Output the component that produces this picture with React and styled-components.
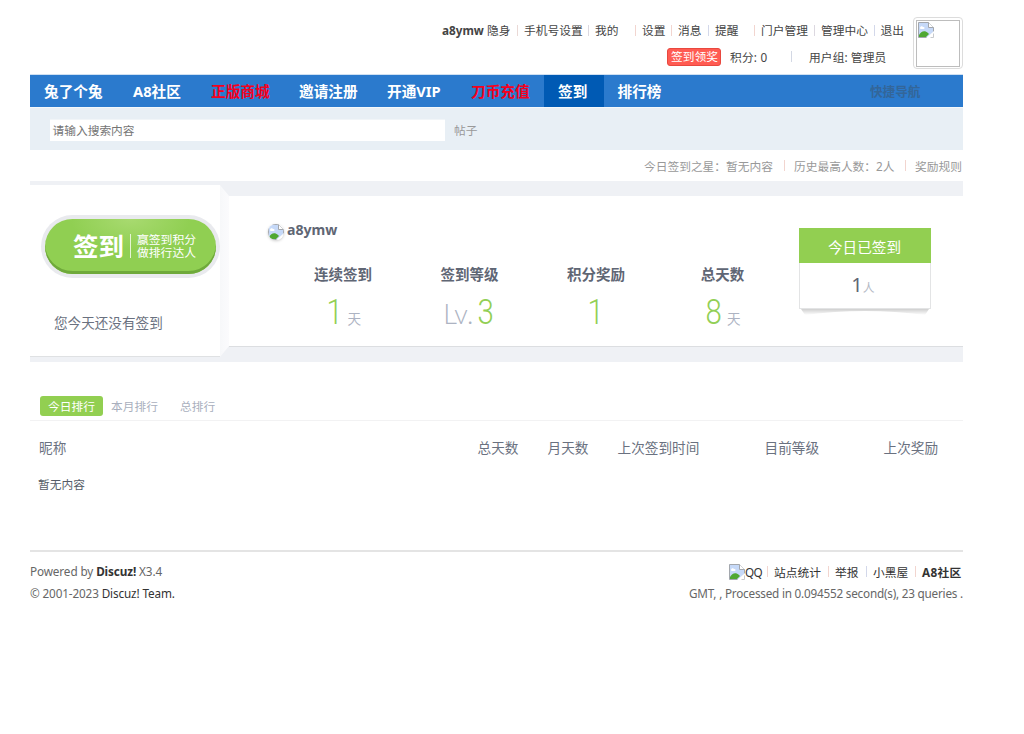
import React from 'react';
import styled, { createGlobalStyle } from 'styled-components';

const Global = createGlobalStyle`
  * { box-sizing: border-box; }
  body {
    margin: 0;
    background: #fff;
    color: #444;
    font: 11.72px/20px "Noto Sans", "Noto Sans CJK SC", sans-serif;
  }
`;

const Page = styled.div`
  width: 933px;
  margin-left: 30px;
  display: flex;
  flex-direction: column;
`;

/* One run of text; $w is the distance to the start of the next run. */
const Run = styled.span`
  display: block;
  flex: none;
  width: ${p => p.$w}px;
  white-space: nowrap;
  color: ${p => p.$color || 'inherit'};
  font-weight: ${p => (p.$bold ? 700 : 400)};
  letter-spacing: ${p => p.$ls || 0}px;
`;

const Bar = styled.i`
  flex: none;
  width: 1px;
  height: 11px;
  margin-right: ${p => p.$after ?? 6}px;
  background: ${p => p.$color || '#d3d8e4'};
`;

const Line = styled.div`
  display: flex;
  align-items: center;
  justify-content: ${p => (p.$end ? 'flex-end' : 'flex-start')};
  height: ${p => p.$h || 20}px;
  padding-left: ${p => p.$left || 0}px;
`;

const Header = styled.header`
  display: flex;
  height: 74px;
  padding-top: 17px;
`;

const UserLinks = styled.div`
  width: 882.5px;
  display: flex;
  flex-direction: column;
  gap: 1px;
`;

const SignTag = styled.span`
  width: 54px;
  height: 18px;
  margin-right: 9px;
  border: 1px solid #e8483f;
  border-radius: 3px;
  background: #ff5b52;
  color: #fff;
  line-height: 15px;
  padding-left: 3px;
  white-space: nowrap;
`;

const Avatar = styled.div`
  width: 50.5px;
  height: 52px;
  padding: 2px;
  border: 1px solid #dcdcdc;
  border-radius: 4px;
  background: #fff;
`;

const AvatarInner = styled.div`
  height: 47px;
  border: 1px solid #bdbdbd;
  padding: 1px;
  line-height: 0;
`;

const Nav = styled.nav`
  display: flex;
  height: 33px;
  background: #2b7acd;
  border-top: 1px solid #cfe0f2;
  font-size: 14.65px;
  line-height: 32px;
`;

const NavItem = styled.a`
  flex: none;
  width: ${p => p.$w}px;
  padding-left: 14px;
  color: ${p => p.$color || '#fff'};
  background: ${p => (p.$active ? '#005ab4' : 'transparent')};
  font-weight: 700;
  white-space: nowrap;
`;

const QuickNav = styled.a`
  margin-left: auto;
  width: 93px;
  font-size: 12.6px;
  font-weight: 700;
  line-height: 33px;
  color: #336699;
`;

const SearchBar = styled.div`
  display: flex;
  align-items: center;
  height: 43px;
  padding: 2px 0 0 20px;
  gap: 9px;
  background: #e8eff5;
  border-top: 1px solid #f4f8fb;
  color: #999;
`;

const SearchBox = styled.div`
  width: 395px;
  height: 22px;
  padding-left: 2.5px;
  border-top: 1px solid #f1f5f8;
  background: #fff;
  color: #757575;
  line-height: 21px;
`;

const Hero = styled.section`
  display: grid;
  grid-template-columns: 190px 9px 734px;
  height: 181px;
  padding-top: 4px;
  background: #eff1f5;
`;

const HeroLeft = styled.div`
  height: 172px;
  background: #fff;
  border-bottom: 1px solid #dfe1e3;
  padding: 30px 0 0 11px;
`;

const Fold = styled.div`
  height: 172px;
  background: linear-gradient(90deg, #f7f8fa, #fbfbfd);
  clip-path: polygon(0 0, 100% 11px, 100% 161px, 0 100%);
`;

const HeroRight = styled.div`
  display: flex;
  height: 152px;
  margin-top: 11px;
  height: 151px;
  background: #fff;
  border-bottom: 1px solid #dcdee1;
  color: #5f6674;
`;

const SignButton = styled.div`
  width: 179px;
  height: 63px;
  padding: 4px;
  border-radius: 32px;
  background: #e9eaee;
`;

const SignFace = styled.div`
  display: flex;
  align-items: center;
  height: 55px;
  padding: 0 0 2px 28px;
  border-radius: 28px;
  background: radial-gradient(ellipse 60px 30px at 50% 0, #a8da70, #90cf52);
  box-shadow: inset 0 -3px 0 #6fa93b;
  color: #fff;
`;

const SignWord = styled.b`
  width: 57px;
  font-size: 25.5px;
  white-space: nowrap;
`;

const SignSlogan = styled.div`
  display: flex;
  flex-direction: column;
  justify-content: center;
  height: 24px;
  padding-left: 6px;
  border-left: 1px solid #e4f4d3;
  font-size: 11.8px;
  white-space: nowrap;
  span { line-height: 13px; }
`;

const SignHint = styled.p`
  margin: 34px 0 0 13px;
  color: #6a7180;
  font-size: 13.6px;
  line-height: 22px;
`;

const Profile = styled.div`
  width: 569.5px;
  padding: 23px 0 0 39px;
`;

const NameRow = styled.div`
  display: flex;
  align-items: center;
  gap: 3px;
  height: 22px;
  font-size: 14.1px;
  font-weight: 700;
`;

const RoundIcon = styled.span`
  width: 16px;
  height: 16px;
  margin-top: 4px;
  overflow: hidden;
  border-radius: 8px;
  box-shadow: 0 1px 3px #ccc;
  line-height: 0;
`;

const Stats = styled.div`
  display: grid;
  grid-template-columns: 150px 103px 150px 103px;
  margin-top: 22px;
`;

const Stat = styled.div`
  display: flex;
  flex-direction: column;
  align-items: center;
`;

const StatTitle = styled.b`
  font-size: 14.5px;
  line-height: 22px;
  white-space: nowrap;
`;

const StatValue = styled.div`
  display: flex;
  align-items: baseline;
  gap: 3px;
  height: 42px;
  margin-top: 7px;
  font-size: 14px;
  line-height: 42px;
  color: #adb3c2;
`;

const Digit = styled.span`
  font-family: Roboto, sans-serif;
  font-size: 35px;
  font-weight: 300;
  color: #92cf55;
  transform: scaleX(0.84);
`;

const Unit = styled.span`
  font-size: 13.6px;
`;

const Level = styled.span`
  font-family: Lato, sans-serif;
  font-size: 27px;
  font-weight: 300;
`;

const TodayCard = styled.div`
  position: relative;
  width: 132px;
  height: 81px;
  margin-top: 32px;
  border: 1px solid #e3e4e5;
  background: #fff;
  text-align: center;
`;

const CardShadow = styled.svg`
  position: absolute;
  left: 0;
  top: 80px;
`;

const CardHead = styled.div`
  height: 35px;
  margin: -1px -1px 0;
  background: #92cf51;
  color: #fff;
  font-size: 14.6px;
  line-height: 38px;
`;

const CardCount = styled.div`
  padding-right: 3px;
  font-size: 11.8px;
  line-height: 44px;
  color: #b5bac6;
`;

const Count = styled.span`
  font-size: 20px;
  color: #5f6674;
`;

const Tabs = styled.div`
  display: flex;
  height: 59px;
  padding: 34px 0 0 10px;
  border-bottom: 1px solid #f2f2f3;
  color: #a9afbd;
`;

const Tab = styled.a`
  width: ${p => p.$w}px;
  height: 20px;
  padding-left: 8px;
  line-height: 21px;
  border-radius: 3px;
  background: ${p => (p.$active ? '#92cf51' : 'transparent')};
  color: ${p => (p.$active ? '#fff' : 'inherit')};
`;

const TableHead = styled.div`
  display: flex;
  height: 53px;
  padding: 0 0 0 9px;
  font-size: 13.65px;
  line-height: 53px;
  color: #6a7180;
`;

const Empty = styled.div`
  height: 76px;
  padding: 0 0 0 8px;
  color: #555b66;
`;

const Footer = styled.footer`
  display: flex;
  justify-content: space-between;
  border-top: 2px solid #e4e4e4;
  padding-top: 9px;
  color: #666;
`;

const FootCol = styled.div`
  display: flex;
  flex-direction: column;
  gap: 1px;
  color: #666;
  b, em { color: #333; font-style: normal; }
`;

const FootText = styled.div`
  height: 21px;
  line-height: 20px;
  letter-spacing: ${p => p.$ls || 0}px;
  white-space: pre;
  text-align: ${p => (p.$end ? 'right' : 'left')};
`;

const BrokenImage = () => (
  <svg width="16" height="16" viewBox="0 0 16 16">
    <path d="M.5.5h10l5 5v5l-6 5H.5z" fill="#c6d9f8" stroke="#a3a7ad" />
    <path d="M10.500.5v5h5" fill="#fff" stroke="#a3a7ad" />
    <path d="M2 6c0-2 2.500-2.500 3-1 2-.5 2 2 .5 2H3Q2 7 2 6" fill="#fff" />
    <path d="M1 15v-2c2-4 6-5 9-2l1 1-3 3z" fill="#4fa832" />
    <path d="M8 16l8-7v7z" fill="#fff" />
    <path d="M12.500 15.500h3v-4" fill="none" stroke="#c8cacd" />
  </svg>
);

const PINK = '#f2d5cf';
const links = [
  ['隐身', 30, '#ead9d6', 6],
  ['手机号设置', 64, '#dcd8e0', 6],
  ['我的', 40, PINK, 6],
  ['设置', 29, PINK, 6],
  ['消息', 30, '#d3d8ea', 6],
  ['提醒', 39, PINK, 6],
  ['门户管理', 53, '#dcd8e0', 6],
  ['管理中心', 52.5, '#d3d8ea', 6],
];

const RED = '#f5001d';
const menu = [
  ['兔了个兔', 89],
  ['A8社区', 78],
  ['正版商城', 88, RED],
  ['邀请注册', 88],
  ['开通VIP', 84],
  ['刀币充值', 87, RED],
  ['签到', 59.5, '#fff', true],
  ['排行榜', 74],
];

const columns = [
  ['昵称', 438.5],
  ['总天数', 70],
  ['月天数', 70],
  ['上次签到时间', 147],
  ['目前等级', 119],
  ['上次奖励', 60],
];

export default function App() {
  return (
    <>
      <Global />
      <Page>
        <Header>
          <UserLinks>
            <Line $h={26} $left={412}>
              <Run $w={45} $bold>a8ymw</Run>
              {links.map(([label, w, color, after]) => (
                <React.Fragment key={label}>
                  <Run $w={w}>{label}</Run>
                  <Bar $color={color} $after={after} />
                </React.Fragment>
              ))}
              <Run $w={24}>退出</Run>
            </Line>
            <Line $h={25} $left={637}>
              <SignTag>签到领奖</SignTag>
              <Run $w={61} $ls={0.2}>积分: 0</Run>
              <Bar $after={17} />
              <Run $w={78} $ls={0.1}>用户组: 管理员</Run>
            </Line>
          </UserLinks>
          <Avatar><AvatarInner><BrokenImage /></AvatarInner></Avatar>
        </Header>
        <Nav>
          {menu.map(([label, w, color, active]) => (
            <NavItem key={label} $w={w} $color={color} $active={active}>{label}</NavItem>
          ))}
          <QuickNav>快捷导航</QuickNav>
        </Nav>
        <SearchBar>
          <SearchBox>请输入搜索内容</SearchBox>
          <span>帖子</span>
        </SearchBar>
        <Line $h={31} $left={614}>
          <Run $w={140} $color="#999">今日签到之星：暂无内容</Run>
          <Bar $color={PINK} $after={9} />
          <Run $w={111} $color="#999">历史最高人数：2人</Run>
          <Bar $color={PINK} $after={9} />
          <Run $w={48} $color="#999">奖励规则</Run>
        </Line>
        <Hero>
          <HeroLeft>
            <SignButton>
              <SignFace>
                <SignWord>签到</SignWord>
                <SignSlogan><span>赢签到积分</span><span>做排行达人</span></SignSlogan>
              </SignFace>
            </SignButton>
            <SignHint>您今天还没有签到</SignHint>
          </HeroLeft>
          <Fold />
          <HeroRight>
            <Profile>
              <NameRow><RoundIcon><BrokenImage /></RoundIcon>a8ymw</NameRow>
              <Stats>
                <Stat><StatTitle>连续签到</StatTitle><StatValue><Digit>1</Digit><Unit>天</Unit></StatValue></Stat>
                <Stat><StatTitle>签到等级</StatTitle><StatValue><Level>Lv.</Level><Digit>3</Digit></StatValue></Stat>
                <Stat><StatTitle>积分奖励</StatTitle><StatValue><Digit>1</Digit></StatValue></Stat>
                <Stat><StatTitle>总天数</StatTitle><StatValue><Digit>8</Digit><Unit>天</Unit></StatValue></Stat>
              </Stats>
            </Profile>
            <TodayCard>
              <CardHead>今日已签到</CardHead>
              <CardCount><Count>1</Count>人</CardCount>
              <CardShadow width="130" height="6" viewBox="0 0 130 6">
                <defs>
                  <linearGradient id="cardShadow" x1="0" y1="0" x2="0" y2="1">
                    <stop offset="0" stopColor="#cfcfcf" />
                    <stop offset="1" stopColor="#fff" />
                  </linearGradient>
                </defs>
                <path d="M1 0h128l-4 6Q65-2 5 6z" fill="url(#cardShadow)" />
              </CardShadow>
            </TodayCard>
          </HeroRight>
        </Hero>
        <Tabs>
          <Tab $w={63} $active>今日排行</Tab>
          <Tab $w={69}>本月排行</Tab>
          <Tab $w={60}>总排行</Tab>
        </Tabs>
        <TableHead>
          {columns.map(([label, w]) => <Run key={label} $w={w}>{label}</Run>)}
        </TableHead>
        <Empty>暂无内容</Empty>
        <Footer>
          <FootCol>
            <FootText $ls={-0.1}>Powered by <b>Discuz!</b> X3.4</FootText>
            <FootText $ls={-0.13}>© 2001-2023 <em>Discuz! Team.</em></FootText>
          </FootCol>
          <FootCol>
            <Line $h={21} $end>
              <BrokenImage />
              <Run $w={22} $color="#333" $ls={-0.6}>QQ</Run>
              <Bar $color={PINK} />
              <Run $w={54} $color="#333">站点统计</Run>
              <Bar $color={PINK} />
              <Run $w={31} $color="#333">举报</Run>
              <Bar $color="#d3d8ea" />
              <Run $w={42} $color="#333">小黑屋</Run>
              <Bar $color={PINK} />
              <Run $w={41} $color="#333" $bold $ls={0.3}>A8社区</Run>
            </Line>
            <FootText $end $ls={-0.21}>GMT, , Processed in 0.094552 second(s), 23 queries .</FootText>
          </FootCol>
        </Footer>
      </Page>
    </>
  );
}
